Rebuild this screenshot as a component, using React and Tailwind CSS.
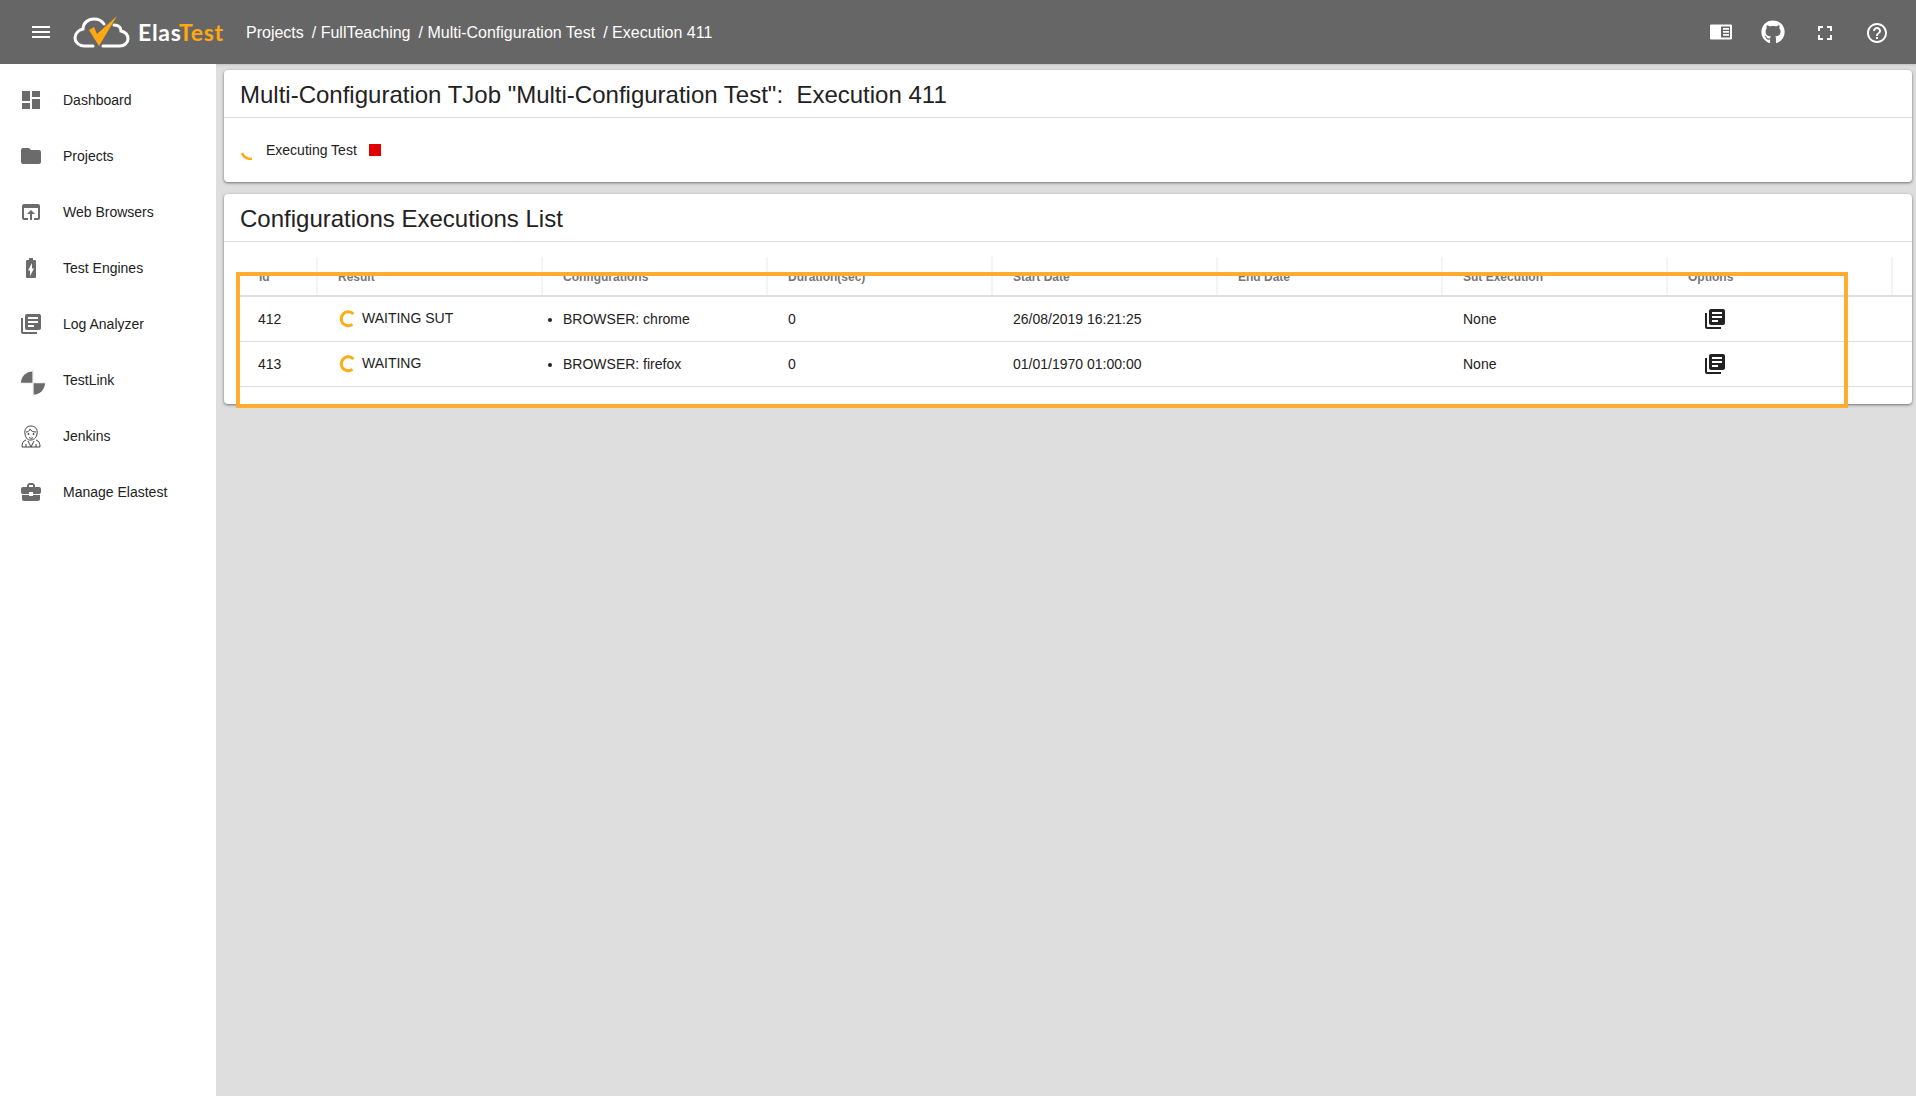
import { MdMenu, MdDashboard, MdFolder, MdOpenInBrowser, MdBatteryChargingFull, MdLibraryBooks, MdBusinessCenter, MdFullscreen, MdHelpOutline } from 'react-icons/md';
import { FaGithub } from 'react-icons/fa';

const TestLinkIcon = () => (
    <svg width="26" height="30" viewBox="0 0 26 30" className="shrink-0 text-[#6b6b6b] translate-x-[2px] translate-y-[3px]">
        <path d="M12.500 15V3.500A11.500 11.500 0 0 0 1 15z" fill="currentColor" />
        <path d="M13.500 15v11.500A11.500 11.500 0 0 0 25 15z" fill="currentColor" />
        <path d="M13 1v28M0 15h26" stroke="#ddd" strokeWidth="0.6" />
    </svg>
);

const JenkinsIcon = () => (
    <svg width="20" height="23" viewBox="0 0 20 23" fill="none" stroke="#444" strokeWidth="1" className="shrink-0">
        <path d="M4 9c-1-5 2-8 6-8s7 3 6 8c-.5 3-2 5.500-6 6S4.500 12 4 9z" />
        <path d="M5 7c2 0 3.500-1 4-3 1 2 3 3 6 3" />
        <circle cx="7.500" cy="9" r="0.6" fill="#444" />
        <circle cx="12.500" cy="9" r="0.6" fill="#444" />
        <path d="M8 12.500c1.500 1 3 1 4 0" />
        <path d="M5 15c-3 1-4 3-4 7h18c0-4-1-6-4-7" />
        <path d="M7 16l3 6 3-6M5 22v-3M15 22v-3" />
    </svg>
);

const nav = [
    { name: 'Dashboard', icon: <MdDashboard size={24} /> },
    { name: 'Projects', icon: <MdFolder size={24} /> },
    { name: 'Web Browsers', icon: <MdOpenInBrowser size={24} /> },
    { name: 'Test Engines', icon: <MdBatteryChargingFull size={24} /> },
    { name: 'Log Analyzer', icon: <MdLibraryBooks size={24} /> },
    { name: 'TestLink', icon: <TestLinkIcon /> },
    { name: 'Jenkins', icon: <JenkinsIcon /> },
    { name: 'Manage Elastest', icon: <MdBusinessCenter size={24} /> },
];

const columns = ['Id', 'Result', 'Configurations', 'Duration(sec)', 'Start Date', 'End Date', 'Sut Execution', 'Options'];

const rows = [
    { id: '412', result: 'WAITING SUT', config: 'BROWSER: chrome', duration: '0', start: '26/08/2019 16:21:25', sut: 'None' },
    { id: '413', result: 'WAITING', config: 'BROWSER: firefox', duration: '0', start: '01/01/1970 01:00:00', sut: 'None' },
];

const gridCols = 'grid grid-cols-[78px_225px_225px_225px_225px_225px_225px_225px_3px]';

function Spinner() {
    return (
        <svg width="20" height="20" viewBox="0 0 20 20" fill="none" className="shrink-0">
            <path d="M15.300 5A7 7 0 1 0 14.500 15.400" stroke="#ffac12" strokeWidth="3" />
        </svg>
    );
}

function Card({ title, children }) {
    return (
        <div className="bg-white rounded shadow-[0_1px_3px_rgba(0,0,0,0.5)]">
            <div className="h-12 px-4 pt-[3px] flex items-center border-b border-[#dcdcdc] text-2xl text-[#222] whitespace-pre">{title}</div>
            {children}
        </div>
    );
}

export default function App() {
    return (
        <div className="relative h-[1096px] w-[1916px] overflow-hidden bg-[#dedede] font-['Liberation_Sans',sans-serif] text-sm text-[#222]">
            {/* Toolbar */}
            <header className="h-16 bg-[#666666] flex items-center text-white shadow-sm">
                <MdMenu size={24} className="ml-[29px] shrink-0" />
                <svg width="58" height="36" viewBox="0 0 58 36" fill="none" className="ml-[20px] shrink-0">
                    <path d="M20 32H11C6 32 2 28 2 24C2 19 6 16 10 15C10 9 15 5 21 5C25 5 29 7 31 10M41 11C46 11 48 14 48 17C52 18 55 21 55 25C55 29 51 32 47 32H30" stroke="#fff" strokeWidth="3" strokeLinecap="round" />
                    <path d="M16 16L21 13L24 20L44 2L26 32z" fill="#ffa812" />
                </svg>
                <div className="ml-[7px] w-[85px] shrink-0 font-['Lato',sans-serif] text-[23px] font-bold leading-none tracking-[0.7px] whitespace-nowrap">
                    Elas<span className="text-[#ffa812]">Test</span>
                </div>
                <nav className="ml-[23px] pt-px flex text-base whitespace-pre">
                    <span>Projects</span>
                    <span className="ml-2">/ FullTeaching</span>
                    <span className="ml-2">/ Multi-Configuration Test</span>
                    <span className="ml-2">/ Execution 411</span>
                </nav>
                <div className="ml-auto mr-[27px] flex items-center gap-[28px]">
                    <svg width="24" height="24" viewBox="0 0 24 24">
                        <path d="M1 5.500A1 1 0 0 1 2 4.500h20a1 1 0 0 1 1 1v13a1 1 0 0 1-1 1H2a1 1 0 0 1-1-1z" fill="#fff" />
                        <path d="M12 6.500h9v11h-9z" fill="#666" />
                        <path d="M14 8h6v1.800h-6zM14 11h6v1.800h-6zM14 14h6v1.800h-6z" fill="#fff" />
                    </svg>
                    <FaGithub size={24} />
                    <MdFullscreen size={24} className="translate-y-px" />
                    <MdHelpOutline size={24} className="translate-y-px" />
                </div>
            </header>

            <div className="flex h-[1032px]">
                {/* Sidebar */}
                <aside className="w-[216px] shrink-0 bg-white pt-2">
                    {nav.map(({ name, icon }) => (
                        <div key={name} className="h-14 flex items-center">
                            <div className="w-[63px] pl-[19px] flex items-center text-[#6b6b6b]">
                                <span className="w-6 h-6 flex items-center justify-center">{icon}</span>
                            </div>
                            <span className="text-[#222]">{name}</span>
                        </div>
                    ))}
                </aside>

                {/* Content */}
                <main className="flex-1 pl-2 pr-1 pt-1.5 flex flex-col gap-3">
                    <Card title={'Multi-Configuration TJob "Multi-Configuration Test":  Execution 411'}>
                        <div className="h-[64px] pl-4 flex items-center">
                            <svg width="20" height="20" viewBox="0 0 20 20" fill="none" className="shrink-0">
                                <path d="M2 13A9 9 0 0 0 12 18.800" stroke="#ffac12" strokeWidth="2.600" />
                            </svg>
                            <span className="ml-[6px]">Executing Test</span>
                            <span className="ml-3 w-3 h-3 bg-[#e00000]" />
                        </div>
                    </Card>
                    <Card title="Configurations Executions List">
                        <div className="pl-4 pt-[15px] pb-[17px]">
                            <div className={`${gridCols} h-[40px] border-b-2 border-[#dedede] text-xs font-bold text-[#777]`}>
                                {columns.map((c) => (
                                    <div key={c} className="border-r-2 border-[#f4f4f4] pl-5 first:pl-[19px] pt-3">{c}</div>
                                ))}
                            </div>
                            {rows.map((r) => (
                                <div key={r.id} className={`${gridCols} h-[45px] border-b border-[#dedede] items-center`}>
                                    <div className="pl-[18px]">{r.id}</div>
                                    <div className="pl-[20px] flex items-center gap-1">
                                        <Spinner />
                                        <span className="-translate-y-px">{r.result}</span>
                                    </div>
                                    <div className="pl-5">
                                        <ul className="list-disc"><li className="marker:text-[#222]">{r.config}</li></ul>
                                    </div>
                                    <div className="pl-5">{r.duration}</div>
                                    <div className="pl-5">{r.start}</div>
                                    <div />
                                    <div className="pl-5">{r.sut}</div>
                                    <div className="pl-[35px] flex"><MdLibraryBooks size={24} className="text-[#222]" /></div>
                                </div>
                            ))}
                        </div>
                    </Card>
                </main>
            </div>

            {/* Highlight drawn over the screenshot */}
            <div className="absolute left-[236px] top-[272px] w-[1612px] h-[136px] border-4 border-[#ffac2f]" />
        </div>
    );
}
